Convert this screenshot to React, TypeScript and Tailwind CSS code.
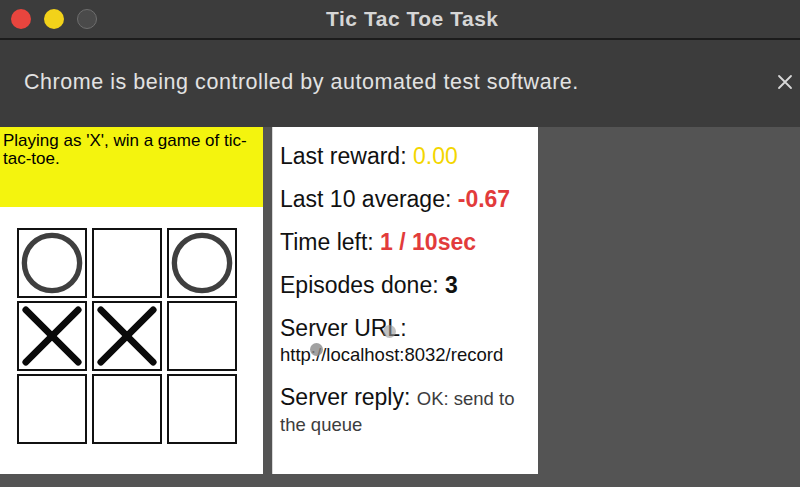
import React from 'react'

const board: ('X' | 'O' | '')[] = ['O', '', 'O', 'X', 'X', '', '', '', '']

function Mark({ v }: { v: 'X' | 'O' | '' }) {
  if (v === 'O') {
    return (
      <svg viewBox="0 0 66 66" className="w-full h-full">
        <circle cx="33" cy="33" r="28.5" fill="none" stroke="#3f3f3f" strokeWidth="5.5" />
      </svg>
    )
  }
  if (v === 'X') {
    return (
      <svg viewBox="0 0 66 66" className="w-full h-full">
        <path d="M6 6 L60 60 M60 6 L6 60" stroke="#0a0a0a" strokeWidth="7" strokeLinecap="round" />
      </svg>
    )
  }
  return null
}

export default function App() {
  return (
    <div className="w-[800px] h-[487px] flex flex-col overflow-hidden bg-[#545454] font-['Liberation_Sans',Arial,sans-serif]">
      {/* Window title bar */}
      <div className="h-[38px] bg-[#3c3c3c] flex items-center shrink-0">
        <div className="flex items-center gap-[13px] pl-[11px]">
          <div className="w-[20px] h-[20px] rounded-full bg-[#e8453e]" />
          <div className="w-[20px] h-[20px] rounded-full bg-[#f2d21a]" />
          <div className="w-[20px] h-[20px] rounded-full bg-[#4a4a4a] border border-[#6e6e6e]" />
        </div>
        <div className="ml-[229px] text-[21px] font-bold text-[#d6d6d6] tracking-[0.025em]">Tic Tac Toe Task</div>
      </div>
      <div className="h-[2px] bg-[#1c1c1c] shrink-0" />

      {/* Automation info bar */}
      <div className="h-[87px] bg-[#3c3c3c] flex items-center justify-between pl-[24px] pr-[7px] shrink-0">
        <span className="text-[21.5px] text-[#e2e2e2] tracking-[0.025em] pb-[2px]">
          Chrome is being controlled by automated test software.
        </span>
        <svg viewBox="0 0 16 16" className="w-[16px] h-[16px] mb-[4px]">
          <path d="M2 2 L14 14 M14 2 L2 14" stroke="#d8d8d8" strokeWidth="1.8" strokeLinecap="round" />
        </svg>
      </div>

      {/* Content */}
      <div className="flex gap-[9px] relative">
        <div className="w-[263px] h-[347px] bg-white flex flex-col">
          <div className="h-[80px] bg-[#f4f40e] px-[3px] pt-[5px] text-[17px] leading-[18px] text-black">
            Playing as 'X', win a game of tic-tac-toe.
          </div>
          <div className="grid grid-cols-[70px_70px_70px] gap-x-[5px] gap-y-[3px] pl-[17px] pt-[21px]">
            {board.map((v, i) => (
              <div key={i} className="w-[70px] h-[70px] border-2 border-[#111] p-[1px]">
                <Mark v={v} />
              </div>
            ))}
          </div>
        </div>

        <div className="w-[266px] h-[347px] bg-white border-l border-[#d8d8d8] pl-[7px] pt-[16px] text-[23px] leading-[26px] text-[#111]">
          <div className="mb-[17px]">
            Last reward: <span className="text-[#f3d600]">0.00</span>
          </div>
          <div className="mb-[17px]">
            Last 10 average: <span className="font-bold text-[#e23b3b]">-0.67</span>
          </div>
          <div className="mb-[17px]">
            Time left: <span className="font-bold text-[#e23b3b]">1 / 10sec</span>
          </div>
          <div className="mb-[17px]">
            Episodes done: <span className="font-bold">3</span>
          </div>
          <div className="mb-[17px]">
            Server URL:
            <div className="text-[18.5px] leading-[27px]">http://localhost:8032/record</div>
          </div>
          <div className="pr-[10px] leading-[25px]">
            Server reply: <span className="text-[18.5px] text-[#3d3d3d]">OK: send to the queue</span>
          </div>
        </div>

        {/* click markers */}
        <div className="absolute left-[310px] top-[216px] w-[13px] h-[13px] rounded-full bg-[#8a8a8a]/80" />
        <div className="absolute left-[383px] top-[198px] w-[13px] h-[13px] rounded-full bg-[#9a9a9a]/60" />
      </div>
    </div>
  )
}
